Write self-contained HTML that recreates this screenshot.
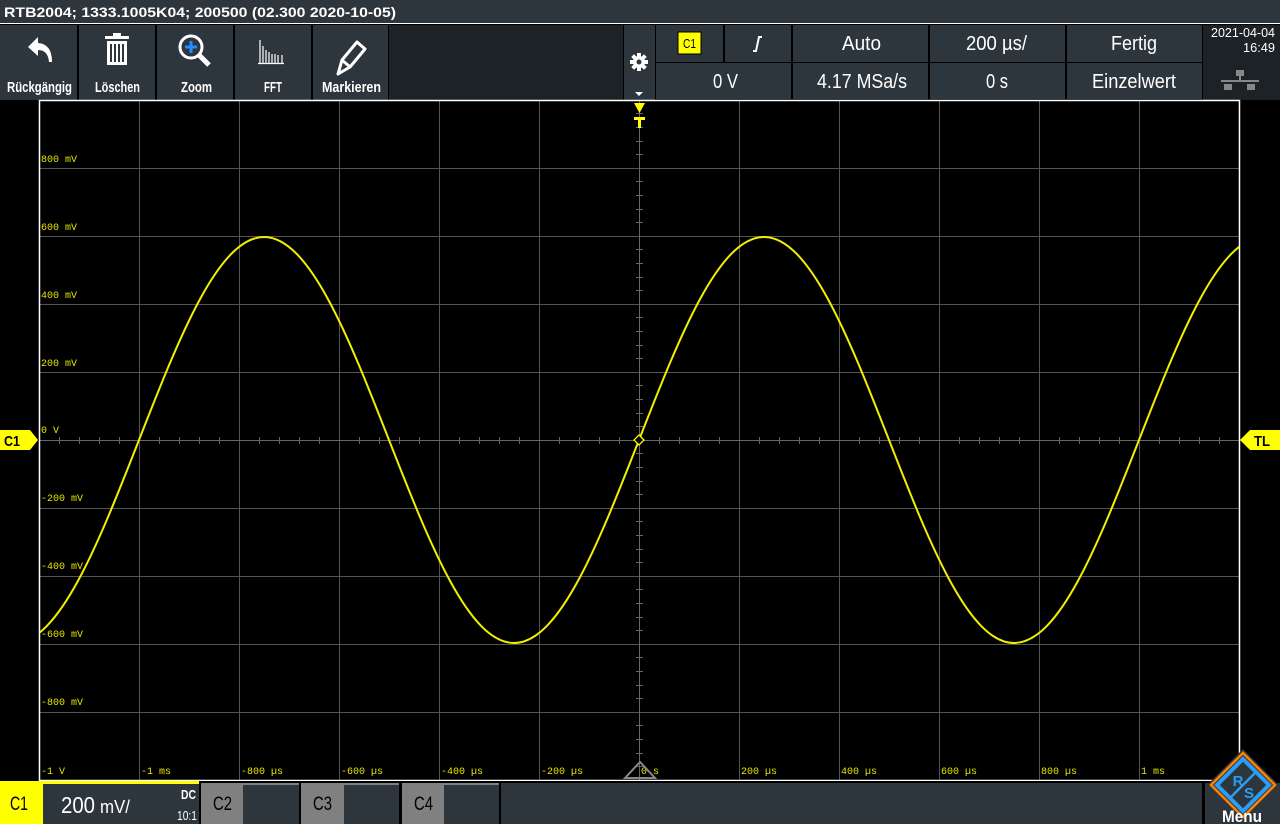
<!DOCTYPE html>
<html><head><meta charset="utf-8"><style>
html,body{margin:0;padding:0;background:#000;width:1280px;height:824px;overflow:hidden}
svg{display:block}
.n{font-family:"Liberation Sans",sans-serif}
</style></head><body>
<svg width="1280" height="824" viewBox="0 0 1280 824" xmlns="http://www.w3.org/2000/svg">
<rect width="1280" height="824" fill="#000"/>
<rect x="0" y="0" width="1280" height="23" fill="#2d363c"/>
<text x="4" y="17" font-family="Liberation Sans,sans-serif" font-weight="bold" font-size="14" fill="#fff" textLength="392" lengthAdjust="spacingAndGlyphs">RTB2004; 1333.1005K04; 200500 (02.300 2020-10-05)</text>
<rect x="0" y="23" width="1280" height="1.5" fill="#fff"/>
<rect x="0" y="24" width="1280" height="76" fill="#000"/>
<g fill="#2d363c">
<rect x="0" y="25" width="77" height="75"/><rect x="79" y="25" width="76" height="75"/><rect x="157" y="25" width="76" height="75"/><rect x="235" y="25" width="76" height="75"/><rect x="313" y="25" width="75" height="75"/>
<rect x="624" y="25" width="31" height="75"/>
<rect x="656" y="25" width="67" height="37"/><rect x="725" y="25" width="66" height="37"/><rect x="793" y="25" width="135" height="37"/><rect x="930" y="25" width="135" height="37"/><rect x="1067" y="25" width="135" height="37"/>
<rect x="656" y="63" width="135" height="36"/><rect x="793" y="63" width="135" height="36"/><rect x="930" y="63" width="135" height="36"/><rect x="1067" y="63" width="135" height="36"/>
</g>
<rect x="389" y="25" width="234" height="75" fill="#1c2226"/>
<rect x="1203" y="25" width="77" height="75" fill="#1c2226"/>
<g class="n" font-size="15" fill="#fff" font-weight="bold" lengthAdjust="spacingAndGlyphs">
<text x="7" y="92" textLength="65" lengthAdjust="spacingAndGlyphs">Rückgängig</text>
<text x="95" y="92" textLength="45" lengthAdjust="spacingAndGlyphs">Löschen</text>
<text x="181" y="92" textLength="31" lengthAdjust="spacingAndGlyphs">Zoom</text>
<text x="264" y="92" textLength="18" lengthAdjust="spacingAndGlyphs">FFT</text>
<text x="322" y="92" textLength="59" lengthAdjust="spacingAndGlyphs">Markieren</text>
</g>
<path d="M28 47 L38 37 L38 43 Q52 44 52 62 L49 62 Q48 50 38 50 L38 56 Z" fill="#fff"/>
<g fill="#fff"><rect x="105" y="36" width="24" height="3"/><rect x="113" y="33" width="8" height="3"/><rect x="107" y="41" width="20" height="24"/></g>
<g fill="#2d363c"><rect x="110" y="44" width="2" height="18"/><rect x="114" y="44" width="2" height="18"/><rect x="118" y="44" width="2" height="18"/><rect x="122" y="44" width="2" height="18"/></g>
<circle cx="191" cy="47" r="11" fill="none" stroke="#fff" stroke-width="3"/>
<path d="M199 55 L209 65" stroke="#fff" stroke-width="5"/>
<path d="M185 47 H197 M191 41 V53" stroke="#1e90ff" stroke-width="3"/>
<g stroke="#fff" stroke-width="1.2"><path d="M260 40V63M263 46V63M266 50V63M269 52V63M272 54V63M275 54V63M278 55V63M282 55V63M258 63.5H284"/></g>
<path d="M338 74 L342 60 L357 42 L365 49 L350 67 Z M343 61 L349 66" fill="none" stroke="#fff" stroke-width="3" stroke-linejoin="round"/>
<g fill="#fff"><circle cx="639" cy="62" r="6"/>
<rect x="637" y="53" width="4" height="18"/><rect x="630" y="60" width="18" height="4"/>
<rect x="637" y="53" width="4" height="18" transform="rotate(45 639 62)"/><rect x="637" y="53" width="4" height="18" transform="rotate(-45 639 62)"/></g>
<circle cx="639" cy="62" r="2.5" fill="#2d363c"/>
<path d="M635 92 h8 l-4 4z" fill="#fff"/>
<rect x="678" y="32" width="23" height="22" fill="#ffff00" stroke="#000" stroke-width="1"/>
<text x="683" y="48" class="n" font-size="13" fill="#000" textLength="13" lengthAdjust="spacingAndGlyphs">C1</text>
<path d="M753 51 H756 L759 37 H762" fill="none" stroke="#fff" stroke-width="2"/>
<g class="n" font-size="20" fill="#fff">
<text x="842" y="50" textLength="39" lengthAdjust="spacingAndGlyphs">Auto</text>
<text x="966" y="50" textLength="61" lengthAdjust="spacingAndGlyphs">200 µs/</text>
<text x="1111" y="50" textLength="46" lengthAdjust="spacingAndGlyphs">Fertig</text>
<text x="713" y="88" textLength="25" lengthAdjust="spacingAndGlyphs">0 V</text>
<text x="817" y="88" textLength="90" lengthAdjust="spacingAndGlyphs">4.17 MSa/s</text>
<text x="986" y="88" textLength="22" lengthAdjust="spacingAndGlyphs">0 s</text>
<text x="1092" y="88" textLength="84" lengthAdjust="spacingAndGlyphs">Einzelwert</text>
</g>
<g class="n" font-size="13" fill="#fff"><text x="1211" y="37" textLength="64" lengthAdjust="spacingAndGlyphs">2021-04-04</text><text x="1243" y="52" textLength="32" lengthAdjust="spacingAndGlyphs">16:49</text></g>
<g fill="#888"><rect x="1236" y="70" width="8" height="6"/><rect x="1239" y="76" width="2" height="4"/><rect x="1221" y="80" width="38" height="2"/><rect x="1224" y="84" width="8" height="6"/><rect x="1247" y="84" width="8" height="6"/></g>
<g stroke="#555" stroke-width="1">
<path d="M139.5 100V780M239.5 100V780M339.5 100V780M439.5 100V780M539.5 100V780M739.5 100V780M839.5 100V780M939.5 100V780M1039.5 100V780M1139.5 100V780"/>
<path d="M39 168.5H1239M39 236.5H1239M39 304.5H1239M39 372.5H1239M39 508.5H1239M39 576.5H1239M39 644.5H1239M39 712.5H1239"/>
</g>
<g stroke="#666" stroke-width="1">
<path d="M39 440.5H1239M639.5 100V780"/>
<path d="M59.5 437V444M79.5 437V444M99.5 437V444M119.5 437V444M159.5 437V444M179.5 437V444M199.5 437V444M219.5 437V444M259.5 437V444M279.5 437V444M299.5 437V444M319.5 437V444M359.5 437V444M379.5 437V444M399.5 437V444M419.5 437V444M459.5 437V444M479.5 437V444M499.5 437V444M519.5 437V444M559.5 437V444M579.5 437V444M599.5 437V444M619.5 437V444M659.5 437V444M679.5 437V444M699.5 437V444M719.5 437V444M759.5 437V444M779.5 437V444M799.5 437V444M819.5 437V444M859.5 437V444M879.5 437V444M899.5 437V444M919.5 437V444M959.5 437V444M979.5 437V444M999.5 437V444M1019.5 437V444M1059.5 437V444M1079.5 437V444M1099.5 437V444M1119.5 437V444M1159.5 437V444M1179.5 437V444M1199.5 437V444M1219.5 437V444"/>
<path d="M636 113.5H643M636 127.5H643M636 141.5H643M636 154.5H643M636 181.5H643M636 195.5H643M636 209.5H643M636 222.5H643M636 249.5H643M636 263.5H643M636 277.5H643M636 290.5H643M636 317.5H643M636 331.5H643M636 345.5H643M636 358.5H643M636 385.5H643M636 399.5H643M636 413.5H643M636 426.5H643M636 453.5H643M636 467.5H643M636 481.5H643M636 494.5H643M636 521.5H643M636 535.5H643M636 549.5H643M636 562.5H643M636 589.5H643M636 603.5H643M636 617.5H643M636 630.5H643M636 657.5H643M636 671.5H643M636 685.5H643M636 698.5H643M636 725.5H643M636 739.5H643M636 753.5H643M636 766.5H643"/>
</g>
<rect x="39.5" y="100.5" width="1200" height="680" fill="none" stroke="#fff" stroke-width="1.5"/>
<g font-family="Liberation Mono,monospace" font-size="10" fill="#e6e600">
<text x="41" y="162">800 mV</text><text x="41" y="230">600 mV</text><text x="41" y="298">400 mV</text><text x="41" y="366">200 mV</text><text x="41" y="433">0 V</text><text x="41" y="501">-200 mV</text><text x="41" y="569">-400 mV</text><text x="41" y="637">-600 mV</text><text x="41" y="705">-800 mV</text>
<text x="41" y="774">-1 V</text><text x="141" y="774">-1 ms</text><text x="241" y="774">-800 µs</text><text x="341" y="774">-600 µs</text><text x="441" y="774">-400 µs</text><text x="541" y="774">-200 µs</text><text x="641" y="774">0 s</text><text x="741" y="774">200 µs</text><text x="841" y="774">400 µs</text><text x="941" y="774">600 µs</text><text x="1041" y="774">800 µs</text><text x="1141" y="774">1 ms</text>
</g>
<clipPath id="cp"><rect x="40" y="101" width="1199" height="679"/></clipPath>
<g clip-path="url(#cp)">
<path d="M-361 440 c40.77,-104 79.76,-203 125,-203 c45.24,0 84.23,99 125,203 c40.77,104 79.76,203 125,203 c45.24,0 84.23,-99 125,-203
c40.77,-104 79.76,-203 125,-203 c45.24,0 84.23,99 125,203 c40.77,104 79.76,203 125,203 c45.24,0 84.23,-99 125,-203
c40.77,-104 79.76,-203 125,-203 c45.24,0 84.23,99 125,203 c40.77,104 79.76,203 125,203 c45.24,0 84.23,-99 125,-203
c40.77,-104 79.76,-203 125,-203 c45.24,0 84.23,99 125,203" fill="none" stroke="#f0f000" stroke-width="2"/>
</g>
<path d="M639 435 L644 440 L639 445 L634 440 Z" fill="#000" stroke="#ffff00" stroke-width="1.3"/>
<path d="M634 103 H645 L639.5 113 Z" fill="#ffff00"/>
<rect x="634" y="117" width="11" height="3" fill="#ffff00"/><rect x="638" y="117" width="3" height="11" fill="#ffff00"/>
<path d="M625 778 L640 762 L655 778 Z" fill="none" stroke="#888" stroke-width="2"/>
<path d="M0 430 H30 L38 440 L30 450 H0 Z" fill="#ffff00"/>
<text x="4" y="446" class="n" font-size="15" font-weight="bold" fill="#000" textLength="16" lengthAdjust="spacingAndGlyphs">C1</text>
<path d="M1280 430 H1250 L1240 440 L1250 450 H1280 Z" fill="#ffff00"/>
<text x="1254" y="446" class="n" font-size="15" font-weight="bold" fill="#000" textLength="16" lengthAdjust="spacingAndGlyphs">TL</text>
<rect x="0" y="781" width="1280" height="43" fill="#000"/>
<rect x="0" y="781" width="43" height="43" fill="#ffff00"/>
<text x="10" y="810" class="n" font-size="19" fill="#000" textLength="18" lengthAdjust="spacingAndGlyphs">C1</text>
<rect x="43" y="781" width="156" height="43" fill="#2d363c"/><rect x="43" y="781" width="156" height="3" fill="#ffff00"/>
<text x="61" y="813" class="n" font-size="23" fill="#fff" textLength="34" lengthAdjust="spacingAndGlyphs">200</text><text x="100" y="813" class="n" font-size="18" fill="#fff" textLength="30" lengthAdjust="spacingAndGlyphs">mV/</text>
<text x="181" y="799" class="n" font-size="13" font-weight="bold" fill="#fff" textLength="15" lengthAdjust="spacingAndGlyphs">DC</text>
<text x="177" y="820" class="n" font-size="13" fill="#fff" textLength="20" lengthAdjust="spacingAndGlyphs">10:1</text>
<rect x="201" y="783" width="42" height="41" fill="#808080"/><rect x="243" y="783" width="56" height="41" fill="#2d363c"/><rect x="243" y="783" width="56" height="2" fill="#808080"/>
<rect x="301" y="783" width="43" height="41" fill="#808080"/><rect x="344" y="783" width="55" height="41" fill="#2d363c"/><rect x="344" y="783" width="55" height="2" fill="#808080"/>
<rect x="402" y="783" width="42" height="41" fill="#808080"/><rect x="444" y="783" width="55" height="41" fill="#2d363c"/><rect x="444" y="783" width="55" height="2" fill="#808080"/>
<g class="n" font-size="19" fill="#000"><text x="213" y="810" textLength="19" lengthAdjust="spacingAndGlyphs">C2</text><text x="313" y="810" textLength="19" lengthAdjust="spacingAndGlyphs">C3</text><text x="414" y="810" textLength="19" lengthAdjust="spacingAndGlyphs">C4</text></g>
<rect x="501" y="783" width="701" height="41" fill="#2d363c"/>
<rect x="1205" y="783" width="75" height="41" fill="#2d363c"/>
<path d="M1243 749 L1279 785 L1243 821 L1207 785 Z" fill="#2d363c"/>
<path d="M1243 753 L1275 785 L1243 817 L1211 785 Z" fill="none" stroke="#ff8000" stroke-width="2.5"/>
<path d="M1243 759 L1269 785 L1243 811 L1217 785 Z" fill="none" stroke="#2a9df4" stroke-width="4"/>
<path d="M1229 799 L1257 771" stroke="#2a9df4" stroke-width="2.5"/>
<text x="1238" y="786" font-family="Liberation Sans,sans-serif" font-weight="bold" font-size="15" fill="#2a9df4" text-anchor="middle">R</text>
<text x="1249" y="798" font-family="Liberation Sans,sans-serif" font-weight="bold" font-size="15" fill="#2a9df4" text-anchor="middle">S</text>
<text x="1222" y="822" class="n" font-size="17" font-weight="bold" fill="#fff" textLength="40" lengthAdjust="spacingAndGlyphs">Menu</text>
</svg>
</body></html>
